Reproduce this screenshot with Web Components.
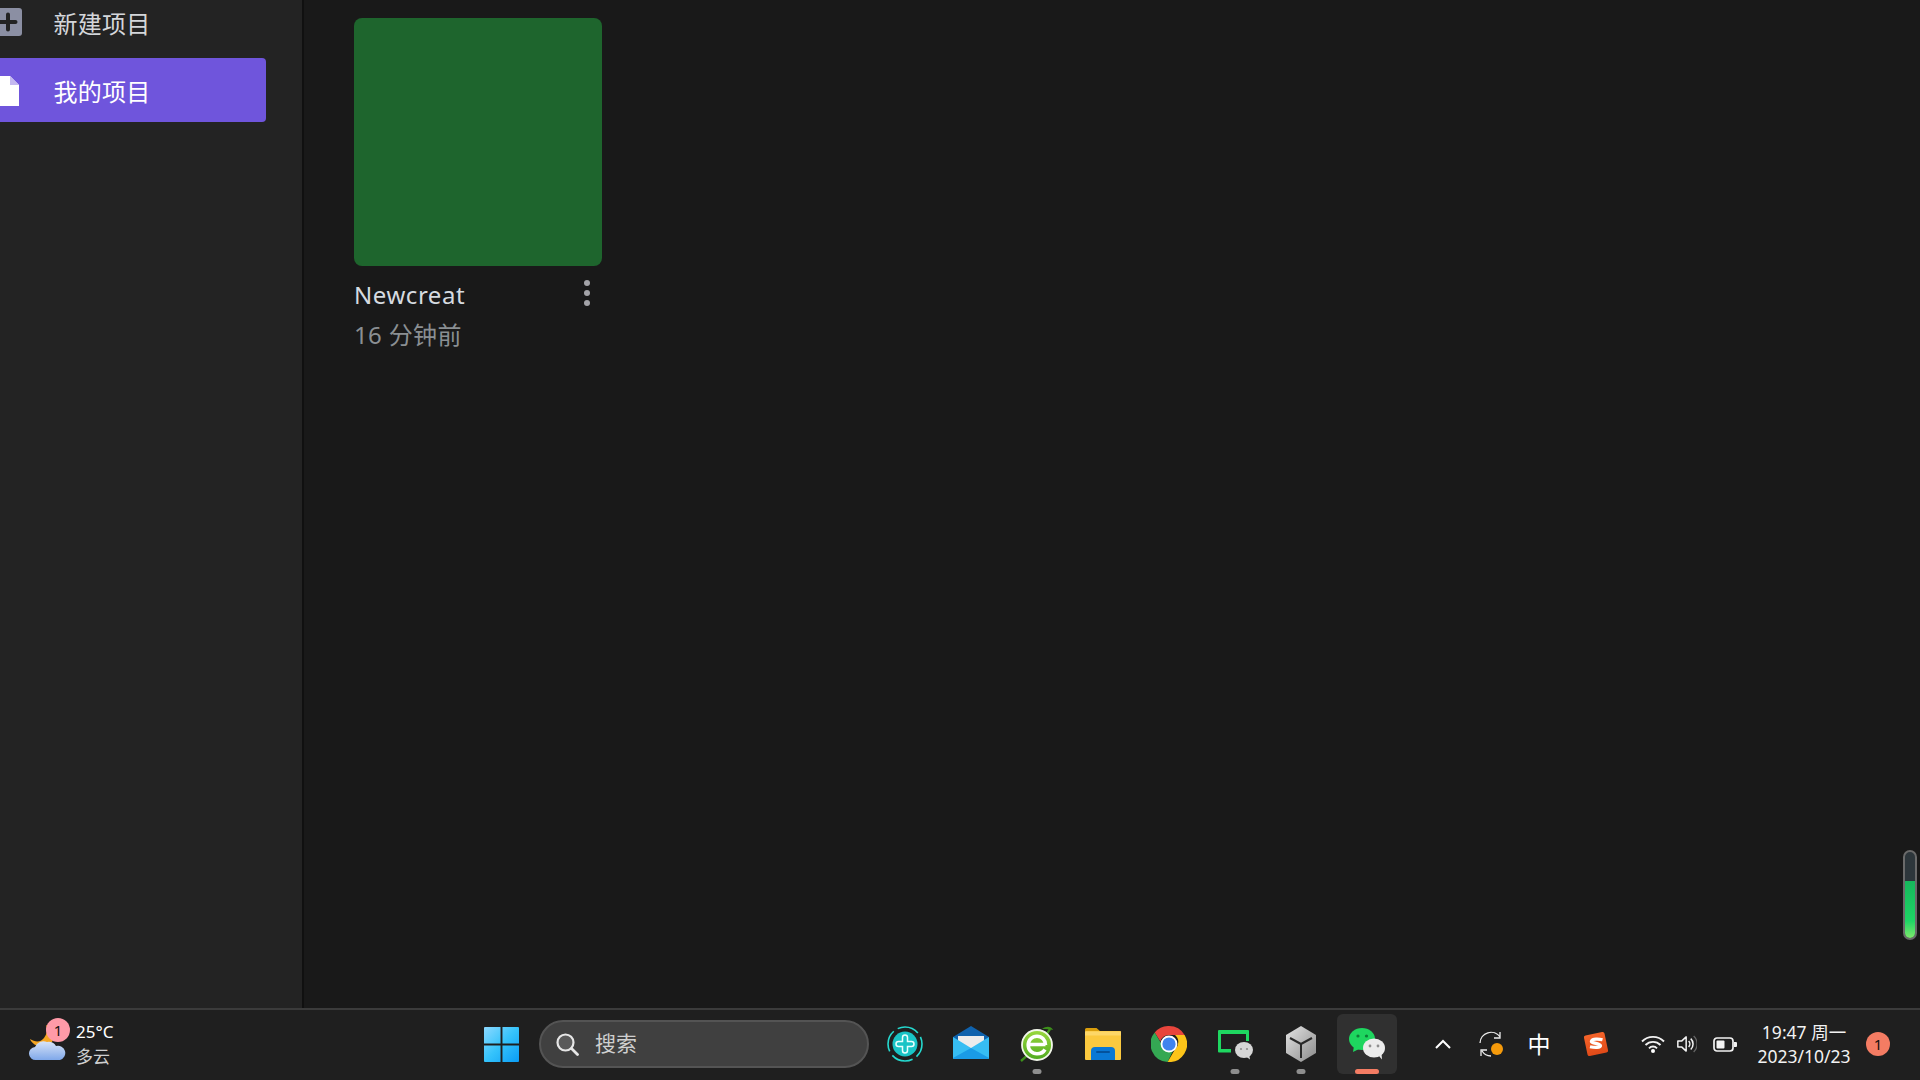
<!DOCTYPE html>
<html lang="zh">
<head>
<meta charset="utf-8">
<title>我的项目</title>
<style>
  html, body { margin: 0; height: 100%; background: #191919; overflow: hidden; }
  body { font-family: "Noto Sans", "Noto Sans CJK SC", sans-serif; }
  svg { display: block; }
  tray-item .ime { font-size: 23px; color: #fff; font-weight: 400; line-height: 24px; }
</style>
</head>
<body>
<app-shell>
  <side-bar slot="side">
    <nav-item label="新建项目">
      <svg slot="icon" width="28" height="28" viewBox="0 0 28 28"><rect width="28" height="28" rx="3" fill="#8b8fa3"/><path d="M14 6.500v15M6.500 14h15" stroke="#232323" stroke-width="4" stroke-linecap="round"/></svg>
    </nav-item>
    <nav-item label="我的项目" active>
      <svg slot="icon" width="28" height="30" viewBox="0 0 28 30"><path d="M3 0h13l9 9v21H3z" fill="#fff"/><path d="M16 0l9 9h-9z" fill="#c4b8f0"/></svg>
    </nav-item>
  </side-bar>
  <main-area slot="main">
    <project-card name="Newcreat" time="16 分钟前" color="#1e652d"></project-card>
  </main-area>
  <task-bar slot="bar">
    <weather-widget slot="left" temp="25°C" text="多云"></weather-widget>

    <task-icon slot="center">
      <svg width="35" height="35" viewBox="0 0 36 36"><defs><linearGradient id="w1" x1="0" y1="0" x2="1" y2="1"><stop offset="0" stop-color="#8cd9ff"/><stop offset=".5" stop-color="#35c3fb"/><stop offset="1" stop-color="#0a9cf5"/></linearGradient></defs><path d="M1 0h16v17H0V1a1 1 0 0 1 1-1zM19 0h16a1 1 0 0 1 1 1v16H19zM0 19h17v17H1a1 1 0 0 1-1-1zM19 19h17v16a1 1 0 0 1-1 1H19z" fill="url(#w1)"/></svg>
    </task-icon>
    <search-box slot="center" placeholder="搜索"></search-box>
    <task-icon slot="center">
      <svg width="36" height="36" viewBox="0 0 36 36"><circle cx="18" cy="18" r="17" fill="none" stroke="#25d9cf" stroke-width="1.600" stroke-dasharray="22 4.700" stroke-dashoffset="8"/><circle cx="18" cy="18" r="12.500" fill="#19c4c6"/><path d="M15.500 11.500a2.500 2.500 0 0 1 5 0v4h4a2.500 2.500 0 0 1 0 5h-4v4a2.500 2.500 0 0 1-5 0v-4h-4a2.500 2.500 0 0 1 0-5h4z" fill="none" stroke="#e9fffe" stroke-width="1.500"/></svg>
    </task-icon>
    <task-icon slot="center">
      <svg width="36" height="36" viewBox="0 0 36 36"><path d="M0 11L18 0l18 11v3H0z" fill="#0f62ad"/><path d="M5 16V10h26v6L18 24z" fill="#ececec"/><path d="M0 11l18 11 18-11v21a1 1 0 0 1-1 1H1a1 1 0 0 1-1-1z" fill="#36bdf3"/><path d="M36 32L18 22 0 32v0a1 1 0 0 0 1 1h34a1 1 0 0 0 1-1z" fill="#1a9be6"/></svg>
    </task-icon>
    <task-icon slot="center" state="open">
      <svg width="36" height="36" viewBox="0 0 36 36"><defs><linearGradient id="e1" x1="0" y1="0" x2="0" y2="1"><stop offset="0" stop-color="#9bd93f"/><stop offset="1" stop-color="#4eaa1f"/></linearGradient></defs><path d="M2 35C8 30 26 12 31 3" fill="none" stroke="#3d8f1b" stroke-width="2.500"/><circle cx="18" cy="19" r="15" fill="url(#e1)" stroke="#f2f7ea" stroke-width="1.800"/><path d="M10 18.500h16.500M26 23.500c-1.500 2.600-4.500 4.300-8 4.300-5 0-8.800-3.800-8.800-8.800s3.800-8.800 8.800-8.800 8.500 3.800 8.500 8.800" fill="none" stroke="#fff" stroke-width="3.600"/><path d="M23 3c4-3 9-3 11 1-3-1-7-1-11-1z" fill="#3d8f1b"/></svg>
    </task-icon>
    <task-icon slot="center">
      <svg width="36" height="36" viewBox="0 0 36 36"><path d="M0 3.500a1.500 1.500 0 0 1 1.500-1.500h10l4 3.500H0z" fill="#d99e0d"/><rect y="5" width="36" height="29" rx="1" fill="#fbc93f"/><path d="M0 5.500h36v4H0z" fill="#fdd768"/><path d="M6 34v-9a4 4 0 0 1 4-4h16a4 4 0 0 1 4 4v9z" fill="#0a78d4"/><rect x="11" y="25" width="14" height="2" rx="1" fill="#04529c"/></svg>
    </task-icon>
    <task-icon slot="center">
      <svg width="36" height="36" viewBox="0 0 36 36"><path d="M18 0a18 18 0 0 1 15.600 9H18a9 9 0 0 0-8.600 6.500L3.700 6.500A18 18 0 0 1 18 0z" fill="#e8453c"/><path d="M3.700 6.500l8 13.500a7 7 0 0 0 10.400 4.400L16.600 36A18 18 0 0 1 3.700 6.500z" fill="#34a853"/><path d="M33.600 9A18 18 0 0 1 16.600 36l7.900-13.500A9 9 0 0 0 24 9z" fill="#fcc419"/><circle cx="18" cy="18" r="8.400" fill="#fff"/><circle cx="18" cy="18" r="6.600" fill="#3f83ee"/></svg>
    </task-icon>
    <task-icon slot="center" state="open">
      <svg width="36" height="36" viewBox="0 0 36 36"><path d="M2 4h29a1 1 0 0 1 1 1v10h-3V8H4v15h10v3.500H2a1 1 0 0 1-1-1V5a1 1 0 0 1 1-1z" fill="#1ed760"/><ellipse cx="27" cy="24" rx="9" ry="8" fill="#d6d6d6"/><path d="M29 30.500l4 3-.8-5z" fill="#d6d6d6"/><circle cx="24" cy="23" r="1.100" fill="#8e8e8e"/><circle cx="30" cy="23" r="1.100" fill="#8e8e8e"/></svg>
    </task-icon>
    <task-icon slot="center" state="open">
      <svg width="36" height="36" viewBox="0 0 36 36"><defs><linearGradient id="c1" x1="0" y1="0" x2="1" y2="1"><stop offset="0" stop-color="#e4e4e4"/><stop offset="1" stop-color="#8b8b8b"/></linearGradient></defs><path d="M18 0l15 9v18l-15 9-15-9V9z" fill="url(#c1)"/><path d="M18 18L7 12M18 18l11-6M18 18v14" stroke="#2a2a2a" stroke-width="2" fill="none"/></svg>
    </task-icon>
    <task-icon slot="center" state="active">
      <svg width="36" height="36" viewBox="0 0 36 36"><ellipse cx="13" cy="13" rx="13" ry="11" fill="#1ed65f"/><path d="M5 20l-1 6 7-3.500z" fill="#1ed65f"/><circle cx="9" cy="10" r="1.600" fill="#0d7d37"/><circle cx="17.500" cy="10" r="1.600" fill="#0d7d37"/><ellipse cx="25" cy="22" rx="11" ry="9.500" fill="#ececec"/><path d="M30 30l3 3.500-.5-6z" fill="#ececec"/><circle cx="21" cy="20" r="1.400" fill="#8f8f8f"/><circle cx="29" cy="20" r="1.400" fill="#8f8f8f"/></svg>
    </task-icon>

    <tray-item slot="right" style="--w:48px">
      <svg width="16" height="10" viewBox="0 0 16 10"><path d="M1 9l7-7 7 7" fill="none" stroke="#fff" stroke-width="2"/></svg>
    </tray-item>
    <tray-item slot="right" style="--w:48px">
      <svg width="24" height="26" viewBox="0 0 24 26"><path d="M1 12A11 11 0 0 1 21 6M21 1v6h-6M3 20a11 11 0 0 0 9 5M2 25v-6h6" fill="none" stroke="#eee" stroke-width="1.300"/><circle cx="18" cy="18" r="6" fill="#f59a0b"/></svg>
    </tray-item>
    <tray-item slot="right" style="--w:48px"><span class="ime">中</span></tray-item>
    <tray-item slot="right" style="--w:66px">
      <svg width="26" height="26" viewBox="0 0 26 26"><defs><linearGradient id="sg" x1="0" y1="0" x2="0" y2="1"><stop offset="0" stop-color="#f5642a"/><stop offset="1" stop-color="#e04a18"/></linearGradient></defs><rect x="2.500" y="2.500" width="21" height="21" rx="2" transform="rotate(-12 13 13)" fill="url(#sg)"/><path d="M19.500 8.800C16 7.800 9.500 7.500 8.500 10c-1 2.500 9 2.200 9 4.700 0 2.200-6 2-10.500 1" fill="none" stroke="#fff" stroke-width="3.200"/></svg>
    </tray-item>
    <tray-item slot="right" style="--w:48px">
      <svg width="24" height="18" viewBox="0 0 24 18"><path d="M1 6.500a15.500 15.500 0 0 1 22 0M4.500 10a10.500 10.500 0 0 1 15 0M8 13.300a5.500 5.500 0 0 1 8 0" fill="none" stroke="#f2f2f2" stroke-width="1.900"/><circle cx="12" cy="16" r="2" fill="#fff"/></svg>
    </tray-item>
    <tray-item slot="right" style="--w:20px">
      <svg width="24" height="22" viewBox="0 0 24 22"><path d="M1 7.500h4.500L11 2.500v17l-5.500-5H1z" fill="none" stroke="#f2f2f2" stroke-width="1.800" stroke-linejoin="round"/><path d="M14 7.500a5 5 0 0 1 0 7M16.500 4.500a9 9 0 0 1 0 13" fill="none" stroke="#f2f2f2" stroke-width="1.800"/><path d="M20 1.500a13 13 0 0 1 0 19" fill="none" stroke="#666" stroke-width="1.600"/></svg>
    </tray-item>
    <tray-item slot="right" style="--w:56px">
      <svg width="24" height="15" viewBox="0 0 24 15"><rect x="1" y="1" width="19" height="13" rx="3" fill="none" stroke="#f2f2f2" stroke-width="1.700"/><rect x="3.500" y="3.500" width="8" height="8" rx="1" fill="#f2f2f2"/><path d="M21 5h2a1 1 0 0 1 1 1v3a1 1 0 0 1-1 1h-2z" fill="#f2f2f2"/></svg>
    </tray-item>
    <clock-widget slot="right" time="19:47 周一" date="2023/10/23"></clock-widget>
    <notify-badge slot="right" count="1"></notify-badge>
  </task-bar>
  <volume-meter slot="overlay" level="66"></volume-meter>
</app-shell>

<script>
function makeTemplate(html) {
  const t = document.createElement('template');
  t.innerHTML = html;
  return t;
}

class BaseEl extends HTMLElement {
  constructor() {
    super();
    this.attachShadow({ mode: 'open' });
    this.shadowRoot.appendChild(this.constructor.template.content.cloneNode(true));
  }
}

class AppShell extends BaseEl {
  static template = makeTemplate(`
    <style>
      :host {
        display: grid;
        grid-template-columns: 304px 1fr;
        grid-template-rows: 1008px 72px;
        width: 1920px;
        height: 1080px;
        position: relative;
        overflow: hidden;
      }
      .bar { grid-column: 1 / -1; }
    </style>
    <slot name="side"></slot>
    <slot name="main"></slot>
    <div class="bar"><slot name="bar"></slot></div>
    <slot name="overlay"></slot>
  `);
}

class SideBar extends BaseEl {
  static template = makeTemplate(`
    <style>
      :host {
        display: block;
        background: #232323;
        border-right: 2px solid #101010;
        overflow: hidden;
      }
      /* list is scrolled a little past the top of the window */
      .list {
        display: flex;
        flex-direction: column;
        gap: 4px;
        margin-top: -10px;
        padding-right: 36px;
      }
    </style>
    <div class="list"><slot></slot></div>
  `);
}

class NavItem extends BaseEl {
  static template = makeTemplate(`
    <style>
      :host {
        display: flex;
        align-items: center;
        height: 64px;
        color: #d4d6da;
        border-radius: 0 4px 4px 0;
        font-size: 24px;
        letter-spacing: .25px;
      }
      :host([active]) { background: #6f55dc; color: #fff; }
      .icon { width: 28px; margin-left: -6px; margin-right: 31.500px; flex: none; }
      :host([active]) .icon { margin-top: 2px; }
    </style>
    <div class="icon"><slot name="icon"></slot></div>
    <span class="label"></span>
  `);
  connectedCallback() {
    this.shadowRoot.querySelector('.label').textContent = this.getAttribute('label');
  }
}

class MainArea extends BaseEl {
  static template = makeTemplate(`
    <style>
      :host { display: block; background: #191919; padding: 18px 0 0 50px; }
    </style>
    <slot></slot>
  `);
}

class ProjectCard extends BaseEl {
  static template = makeTemplate(`
    <style>
      :host { display: block; width: 248px; }
      .thumb { height: 248px; border-radius: 8px; }
      .row { display: flex; justify-content: space-between; margin-top: 12px; height: 34px; }
      .name { font-size: 24px; line-height: 34px; color: #d6dbe0; letter-spacing: .55px; }
      .dots { display: flex; flex-direction: column; gap: 4px; padding: 2px 12px 0 0; }
      .dots i { width: 6px; height: 6px; border-radius: 50%; background: #a3a3a8; }
      .time { font-size: 24px; line-height: 34px; color: #8a8f93; margin-top: 6px; letter-spacing: .35px; }
    </style>
    <div class="thumb"></div>
    <div class="row">
      <span class="name"></span>
      <div class="dots"><i></i><i></i><i></i></div>
    </div>
    <div class="time"></div>
  `);
  connectedCallback() {
    const s = this.shadowRoot;
    s.querySelector('.thumb').style.background = this.getAttribute('color');
    s.querySelector('.name').textContent = this.getAttribute('name');
    s.querySelector('.time').textContent = this.getAttribute('time');
  }
}

class TaskBar extends BaseEl {
  static template = makeTemplate(`
    <style>
      :host {
        display: flex;
        height: 72px;
        box-sizing: border-box;
        background: #1f1f1f;
        border-top: 2px solid #3b3b3b;
        padding-bottom: 2px;
        color: #fff;
      }
      .left { width: 471px; flex: none; }
      .center { display: flex; align-items: center; gap: 6px; width: 926px; flex: none; }
      .right { display: flex; align-items: center; margin-left: 22px; }
    </style>
    <div class="left"><slot name="left"></slot></div>
    <div class="center"><slot name="center"></slot></div>
    <div class="right"><slot name="right"></slot></div>
  `);
}

class WeatherWidget extends BaseEl {
  static template = makeTemplate(`
    <style>
      :host { display: flex; align-items: center; height: 66px; padding-left: 29px; position: relative; }
      .badge {
        position: absolute; left: 46px; top: 8px;
        width: 24px; height: 24px; border-radius: 50%;
        background: #ff9aa8; color: #111;
        font-size: 15px; line-height: 24px; text-align: center;
      }
      .text { margin-left: 9px; font-size: 17px; line-height: 25px; margin-top: 2px; }
      .sub { color: #cfcfcf; }
    </style>
    <svg width="38" height="38" viewBox="0 0 38 38">
      <defs><linearGradient id="cl" x1="0" y1="0" x2="0" y2="1"><stop offset="0" stop-color="#d9e4f7"/><stop offset="1" stop-color="#7fa8ea"/></linearGradient></defs>
      <path d="M17 1a14 14 0 0 1-2 13C11 19 6 18 1 15c3 8 15 10 22 3 3-5 2-14-6-17z" fill="#f5a623"/>
      <path d="M7 36a6.500 6.500 0 0 1-1-13 9 9 0 0 1 12-5 9 9 0 0 1 9 4 7 7 0 0 1 4 14z" fill="url(#cl)"/>
    </svg>
    <div class="badge">1</div>
    <div class="text"><div class="temp"></div><div class="sub"></div></div>
  `);
  connectedCallback() {
    this.shadowRoot.querySelector('.temp').textContent = this.getAttribute('temp');
    this.shadowRoot.querySelector('.sub').textContent = this.getAttribute('text');
  }
}

class SearchBox extends BaseEl {
  static template = makeTemplate(`
    <style>
      :host {
        display: flex; align-items: center;
        width: 330px; height: 48px; box-sizing: border-box;
        margin-left: 2px;
        border: 2px solid #545454; border-radius: 24px;
        background: #404040; padding-left: 15px;
      }
      span { margin-left: 16px; font-size: 21px; line-height: 24px; color: #cfcfcf; margin-top: -2px; }
    </style>
    <svg width="23" height="23" viewBox="0 0 23 23"><circle cx="9.500" cy="9.500" r="8" fill="#5a5a5a" stroke="#e6e6e6" stroke-width="2.200"/><path d="M15.500 15.500l6 6" stroke="#e6e6e6" stroke-width="2.800" stroke-linecap="round"/></svg>
    <span></span>
  `);
  connectedCallback() {
    this.shadowRoot.querySelector('span').textContent = this.getAttribute('placeholder');
  }
}

class TaskIcon extends BaseEl {
  static template = makeTemplate(`
    <style>
      :host {
        display: flex; align-items: center; justify-content: center;
        width: 60px; height: 60px; border-radius: 6px;
        position: relative; flex: none;
      }
      :host([state="active"]) { background: #303030; }
      .mark {
        display: none; position: absolute; left: 50%; bottom: 0; transform: translateX(-50%);
        width: 9px; height: 5px; border-radius: 3px; background: #8e8e8e;
      }
      :host([state="open"]) .mark { display: block; }
      :host([state="active"]) .mark { display: block; width: 24px; background: #f47c63; }
    </style>
    <slot></slot>
    <div class="mark"></div>
  `);
}

class TrayItem extends BaseEl {
  static template = makeTemplate(`
    <style>
      :host { display: flex; align-items: center; justify-content: center; width: var(--w, 48px); flex: none; }
    </style>
    <slot></slot>
  `);
}

class ClockWidget extends BaseEl {
  static template = makeTemplate(`
    <style>
      :host { display: block; width: 102px; text-align: center; font-size: 17.500px; line-height: 24px; color: #f2f2f2; white-space: nowrap; }
    </style>
    <div class="time"></div>
    <div class="date"></div>
  `);
  connectedCallback() {
    this.shadowRoot.querySelector('.time').textContent = this.getAttribute('time');
    this.shadowRoot.querySelector('.date').textContent = this.getAttribute('date');
  }
}

class NotifyBadge extends BaseEl {
  static template = makeTemplate(`
    <style>
      :host {
        display: block; width: 24px; height: 24px; margin-left: 11px;
        border-radius: 50%; background: #f47c63; color: #111;
        font-size: 15px; line-height: 24px; text-align: center;
      }
    </style>
    <span></span>
  `);
  connectedCallback() {
    this.shadowRoot.querySelector('span').textContent = this.getAttribute('count');
  }
}

class VolumeMeter extends BaseEl {
  static template = makeTemplate(`
    <style>
      :host {
        position: absolute; left: 1903px; top: 850px;
        width: 14px; height: 90px; box-sizing: border-box;
        border: 2px solid #6a6a6a; border-radius: 7px;
        background: #2d363b; overflow: hidden;
      }
      .fill {
        position: absolute; left: 0; right: 0; bottom: 0;
        background: linear-gradient(#16b85c, #1ed665 70%, #7ee86d);
      }
    </style>
    <div class="fill"></div>
  `);
  connectedCallback() {
    this.shadowRoot.querySelector('.fill').style.height = this.getAttribute('level') + '%';
  }
}

customElements.define('app-shell', AppShell);
customElements.define('side-bar', SideBar);
customElements.define('nav-item', NavItem);
customElements.define('main-area', MainArea);
customElements.define('project-card', ProjectCard);
customElements.define('task-bar', TaskBar);
customElements.define('weather-widget', WeatherWidget);
customElements.define('search-box', SearchBox);
customElements.define('task-icon', TaskIcon);
customElements.define('tray-item', TrayItem);
customElements.define('clock-widget', ClockWidget);
customElements.define('notify-badge', NotifyBadge);
customElements.define('volume-meter', VolumeMeter);
</script>
</body>
</html>
